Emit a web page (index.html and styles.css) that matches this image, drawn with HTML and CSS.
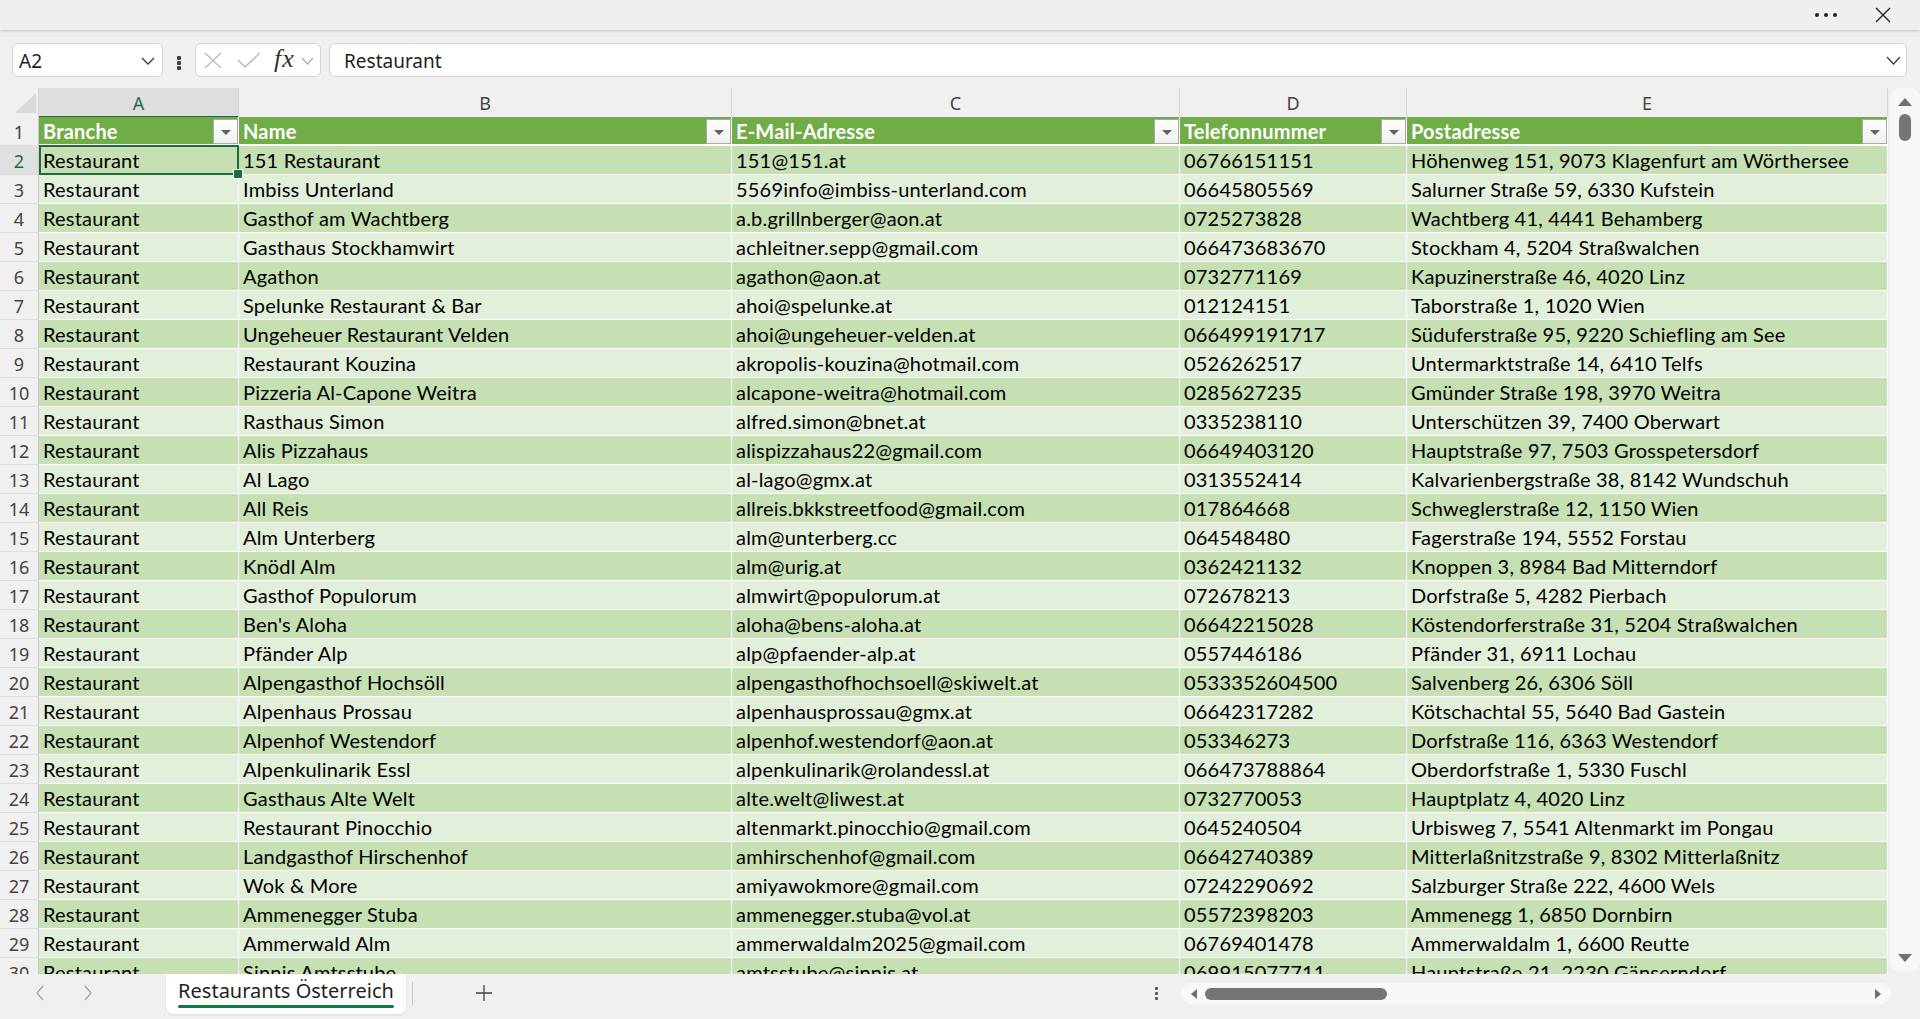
FILE: index.html
```html
<!DOCTYPE html>
<html lang="de">
<head>
<meta charset="utf-8">
<title>Restaurants Österreich</title>
<link rel="stylesheet" href="styles.css">
</head>
<body>
<div class="app">
  <header class="titlebar">
    <span class="more"><i></i><i></i><i></i></span>
    <svg class="close" width="16" height="16" viewBox="0 0 16 16"><path d="M1 1L15 15M15 1L1 15" stroke="#242424" stroke-width="1.4" fill="none"/></svg>
  </header>

  <div class="fbar">
    <div class="namebox">
      <span>A2</span>
      <svg width="14" height="8" viewBox="0 0 14 8"><path d="M1 1L7 7L13 1" stroke="#424242" stroke-width="1.4" fill="none"/></svg>
    </div>
    <div class="vdots"><i></i><i></i><i></i></div>
    <div class="fxgroup">
      <svg class="ic-x" width="18" height="17" viewBox="0 0 18 17"><path d="M1 1L17 16M17 1L1 16" stroke="#b8b8b8" stroke-width="1.3" fill="none"/></svg>
      <svg class="ic-ok" width="24" height="16" viewBox="0 0 24 16"><path d="M1 8L8 15L23 1" stroke="#b8b8b8" stroke-width="1.4" fill="none"/></svg>
      <span class="fx">fx</span>
      <svg class="ic-dd" width="13" height="8" viewBox="0 0 13 8"><path d="M1 1L6.5 7L12 1" stroke="#a8a8a8" stroke-width="1.2" fill="none"/></svg>
    </div>
    <div class="finput">
      <span>Restaurant</span>
      <svg width="15" height="9" viewBox="0 0 15 9"><path d="M1 1L7.5 8L14 1" stroke="#424242" stroke-width="1.4" fill="none"/></svg>
    </div>
  </div>

  <div class="main">
    <div class="sheet">
      <div class="colhdr">
        <div class="corner"><svg width="39" height="28" viewBox="0 0 39 28"><path d="M15 25H36V5Z" fill="#dadada"/></svg></div>
        <div class="ch sel">A</div>
        <div class="ch">B</div>
        <div class="ch">C</div>
        <div class="ch">D</div>
        <div class="ch">E</div>
      </div>

      <div class="row hdr">
        <div class="rh">1</div>
        <div class="c">Branche<span class="flt"></span></div>
        <div class="c">Name<span class="flt"></span></div>
        <div class="c">E-Mail-Adresse<span class="flt"></span></div>
        <div class="c">Telefonnummer<span class="flt"></span></div>
        <div class="c">Postadresse<span class="flt"></span></div>
      </div>

      <div class="row d"><div class="rh sel">2</div><div class="c active">Restaurant</div><div class="c">151 Restaurant</div><div class="c">151@151.at</div><div class="c">06766151151</div><div class="c">Höhenweg 151, 9073 Klagenfurt am Wörthersee</div></div>
      <div class="row l"><div class="rh">3</div><div class="c">Restaurant</div><div class="c">Imbiss Unterland</div><div class="c">5569info@imbiss-unterland.com</div><div class="c">06645805569</div><div class="c">Salurner Straße 59, 6330 Kufstein</div></div>
      <div class="row d"><div class="rh">4</div><div class="c">Restaurant</div><div class="c">Gasthof am Wachtberg</div><div class="c">a.b.grillnberger@aon.at</div><div class="c">0725273828</div><div class="c">Wachtberg 41, 4441 Behamberg</div></div>
      <div class="row l"><div class="rh">5</div><div class="c">Restaurant</div><div class="c">Gasthaus Stockhamwirt</div><div class="c">achleitner.sepp@gmail.com</div><div class="c">066473683670</div><div class="c">Stockham 4, 5204 Straßwalchen</div></div>
      <div class="row d"><div class="rh">6</div><div class="c">Restaurant</div><div class="c">Agathon</div><div class="c">agathon@aon.at</div><div class="c">0732771169</div><div class="c">Kapuzinerstraße 46, 4020 Linz</div></div>
      <div class="row l"><div class="rh">7</div><div class="c">Restaurant</div><div class="c">Spelunke Restaurant &amp; Bar</div><div class="c">ahoi@spelunke.at</div><div class="c">012124151</div><div class="c">Taborstraße 1, 1020 Wien</div></div>
      <div class="row d"><div class="rh">8</div><div class="c">Restaurant</div><div class="c">Ungeheuer Restaurant Velden</div><div class="c">ahoi@ungeheuer-velden.at</div><div class="c">066499191717</div><div class="c">Süduferstraße 95, 9220 Schiefling am See</div></div>
      <div class="row l"><div class="rh">9</div><div class="c">Restaurant</div><div class="c">Restaurant Kouzina</div><div class="c">akropolis-kouzina@hotmail.com</div><div class="c">0526262517</div><div class="c">Untermarktstraße 14, 6410 Telfs</div></div>
      <div class="row d"><div class="rh">10</div><div class="c">Restaurant</div><div class="c">Pizzeria Al-Capone Weitra</div><div class="c">alcapone-weitra@hotmail.com</div><div class="c">0285627235</div><div class="c">Gmünder Straße 198, 3970 Weitra</div></div>
      <div class="row l"><div class="rh">11</div><div class="c">Restaurant</div><div class="c">Rasthaus Simon</div><div class="c">alfred.simon@bnet.at</div><div class="c">0335238110</div><div class="c">Unterschützen 39, 7400 Oberwart</div></div>
      <div class="row d"><div class="rh">12</div><div class="c">Restaurant</div><div class="c">Alis Pizzahaus</div><div class="c">alispizzahaus22@gmail.com</div><div class="c">06649403120</div><div class="c">Hauptstraße 97, 7503 Grosspetersdorf</div></div>
      <div class="row l"><div class="rh">13</div><div class="c">Restaurant</div><div class="c">Al Lago</div><div class="c">al-lago@gmx.at</div><div class="c">0313552414</div><div class="c">Kalvarienbergstraße 38, 8142 Wundschuh</div></div>
      <div class="row d"><div class="rh">14</div><div class="c">Restaurant</div><div class="c">All Reis</div><div class="c">allreis.bkkstreetfood@gmail.com</div><div class="c">017864668</div><div class="c">Schweglerstraße 12, 1150 Wien</div></div>
      <div class="row l"><div class="rh">15</div><div class="c">Restaurant</div><div class="c">Alm Unterberg</div><div class="c">alm@unterberg.cc</div><div class="c">064548480</div><div class="c">Fagerstraße 194, 5552 Forstau</div></div>
      <div class="row d"><div class="rh">16</div><div class="c">Restaurant</div><div class="c">Knödl Alm</div><div class="c">alm@urig.at</div><div class="c">0362421132</div><div class="c">Knoppen 3, 8984 Bad Mitterndorf</div></div>
      <div class="row l"><div class="rh">17</div><div class="c">Restaurant</div><div class="c">Gasthof Populorum</div><div class="c">almwirt@populorum.at</div><div class="c">072678213</div><div class="c">Dorfstraße 5, 4282 Pierbach</div></div>
      <div class="row d"><div class="rh">18</div><div class="c">Restaurant</div><div class="c">Ben's Aloha</div><div class="c">aloha@bens-aloha.at</div><div class="c">06642215028</div><div class="c">Köstendorferstraße 31, 5204 Straßwalchen</div></div>
      <div class="row l"><div class="rh">19</div><div class="c">Restaurant</div><div class="c">Pfänder Alp</div><div class="c">alp@pfaender-alp.at</div><div class="c">0557446186</div><div class="c">Pfänder 31, 6911 Lochau</div></div>
      <div class="row d"><div class="rh">20</div><div class="c">Restaurant</div><div class="c">Alpengasthof Hochsöll</div><div class="c">alpengasthofhochsoell@skiwelt.at</div><div class="c">0533352604500</div><div class="c">Salvenberg 26, 6306 Söll</div></div>
      <div class="row l"><div class="rh">21</div><div class="c">Restaurant</div><div class="c">Alpenhaus Prossau</div><div class="c">alpenhausprossau@gmx.at</div><div class="c">06642317282</div><div class="c">Kötschachtal 55, 5640 Bad Gastein</div></div>
      <div class="row d"><div class="rh">22</div><div class="c">Restaurant</div><div class="c">Alpenhof Westendorf</div><div class="c">alpenhof.westendorf@aon.at</div><div class="c">053346273</div><div class="c">Dorfstraße 116, 6363 Westendorf</div></div>
      <div class="row l"><div class="rh">23</div><div class="c">Restaurant</div><div class="c">Alpenkulinarik Essl</div><div class="c">alpenkulinarik@rolandessl.at</div><div class="c">066473788864</div><div class="c">Oberdorfstraße 1, 5330 Fuschl</div></div>
      <div class="row d"><div class="rh">24</div><div class="c">Restaurant</div><div class="c">Gasthaus Alte Welt</div><div class="c">alte.welt@liwest.at</div><div class="c">0732770053</div><div class="c">Hauptplatz 4, 4020 Linz</div></div>
      <div class="row l"><div class="rh">25</div><div class="c">Restaurant</div><div class="c">Restaurant Pinocchio</div><div class="c">altenmarkt.pinocchio@gmail.com</div><div class="c">0645240504</div><div class="c">Urbisweg 7, 5541 Altenmarkt im Pongau</div></div>
      <div class="row d"><div class="rh">26</div><div class="c">Restaurant</div><div class="c">Landgasthof Hirschenhof</div><div class="c">amhirschenhof@gmail.com</div><div class="c">06642740389</div><div class="c">Mitterlaßnitzstraße 9, 8302 Mitterlaßnitz</div></div>
      <div class="row l"><div class="rh">27</div><div class="c">Restaurant</div><div class="c">Wok &amp; More</div><div class="c">amiyawokmore@gmail.com</div><div class="c">07242290692</div><div class="c">Salzburger Straße 222, 4600 Wels</div></div>
      <div class="row d"><div class="rh">28</div><div class="c">Restaurant</div><div class="c">Ammenegger Stuba</div><div class="c">ammenegger.stuba@vol.at</div><div class="c">05572398203</div><div class="c">Ammenegg 1, 6850 Dornbirn</div></div>
      <div class="row l"><div class="rh">29</div><div class="c">Restaurant</div><div class="c">Ammerwald Alm</div><div class="c">ammerwaldalm2025@gmail.com</div><div class="c">06769401478</div><div class="c">Ammerwaldalm 1, 6600 Reutte</div></div>
      <div class="row d"><div class="rh">30</div><div class="c">Restaurant</div><div class="c">Sinnis Amtsstube</div><div class="c">amtsstube@sinnis.at</div><div class="c">069915077711</div><div class="c">Hauptstraße 21, 2230 Gänserndorf</div></div>
    </div>

    <div class="vscroll">
      <span class="tri up"></span>
      <span class="vthumb"></span>
      <span class="grow"></span>
      <span class="tri down"></span>
    </div>
  </div>

  <footer class="bottombar">
    <div class="nav">
      <svg width="10" height="16" viewBox="0 0 10 16"><path d="M8 1L2 8L8 15" stroke="#a3a3a3" stroke-width="1.3" fill="none"/></svg>
      <svg width="10" height="16" viewBox="0 0 10 16"><path d="M2 1L8 8L2 15" stroke="#a3a3a3" stroke-width="1.3" fill="none"/></svg>
    </div>
    <div class="tab">
      <span class="tabname">Restaurants Österreich</span>
      <span class="tabline"></span>
    </div>
    <span class="tabsep"></span>
    <div class="plus"><svg width="18" height="18" viewBox="0 0 18 18"><path d="M9 1V17M1 9H17" stroke="#424242" stroke-width="1.3" fill="none"/></svg></div>
    <span class="grow"></span>
    <div class="vdots small"><i></i><i></i><i></i></div>
    <div class="hscroll">
      <span class="tri left"></span>
      <span class="hthumb"></span>
      <span class="grow"></span>
      <span class="tri right"></span>
    </div>
  </footer>
</div>
</body>
</html>
```

FILE: styles.css
```css
* { box-sizing: border-box; margin: 0; padding: 0; }
html, body { width: 1920px; height: 1019px; overflow: hidden; }
body { background: #f0f0f0; font-family: "Noto Sans", "Open Sans", sans-serif; color: #242424; }

.app { display: flex; flex-direction: column; height: 1019px; }

/* title bar */
.titlebar {
  height: 30px; flex: none;
  display: flex; align-items: center; justify-content: flex-end;
  gap: 38px; padding-right: 29px;
  background: #efefef;
  box-shadow: 0 1px 3px rgba(0, 0, 0, 0.2);
  position: relative; z-index: 2;
}
.more { display: flex; gap: 5px; }
.more i { display: block; width: 4px; height: 4px; border-radius: 50%; background: #242424; }
.close { display: block; }

/* formula bar */
.fbar { height: 58px; flex: none; display: flex; align-items: flex-start; padding: 13px 13px 0 12px; }
.namebox {
  width: 151px; height: 34px; background: #fff;
  border: 1px solid #d4d4d4; border-radius: 6px;
  display: flex; align-items: center; justify-content: space-between;
  padding: 2px 7px 0 6px; font-size: 19px; color: #1f1f1f;
}
.namebox svg { margin-top: -1px; }
.vdots { width: 32px; height: 34px; display: flex; flex-direction: column; align-items: center; justify-content: center; gap: 1.5px; padding-top: 6px; }
.vdots i { display: block; width: 4px; height: 3.5px; background: #424242; border-radius: 1px; }
.fxgroup {
  width: 126px; height: 34px; background: #fff;
  border: 1px solid #d4d4d4; border-radius: 6px;
  display: flex; align-items: center; padding-left: 8px;
}
.ic-x { margin-top: 1px; }
.ic-ok { margin-left: 15px; }
.fx { margin-left: 13px; font-family: "Liberation Serif", "DejaVu Serif", serif; font-style: italic; font-size: 26px; color: #333; line-height: 1; margin-top: -3px; letter-spacing: 1px; }
.ic-dd { margin-left: 6px; margin-top: 2px; }
.finput {
  flex: 1; margin-left: 8px; height: 34px; background: #fff;
  border: 1px solid #d4d4d4; border-radius: 6px;
  display: flex; align-items: center; justify-content: space-between;
  padding: 2px 5px 0 14px; font-size: 19px; color: #1f1f1f;
}
.finput svg { margin-top: -2px; }

/* main grid */
.main { height: 886px; flex: none; display: flex; }
.sheet { width: 1888px; height: 886px; overflow: hidden; font-family: "Lato", "Liberation Sans", sans-serif; font-size: 20px; letter-spacing: 0.2px; color: #000; }

.colhdr, .row {
  display: grid;
  grid-template-columns: 39px 200px 493px 448px 227px 481px;
}
.colhdr { height: 29px; }
.corner { border-bottom: 1px solid #c4c4c4; border-right: 1px solid #d4d4d4; }
.corner svg { display: block; }
.ch {
  font-family: "Noto Sans", sans-serif; font-size: 18px; color: #444; letter-spacing: 0;
  text-align: center; line-height: 26px; padding-top: 2px;
  border-right: 1px solid #d6d6d6; border-bottom: 1px solid #c4c4c4;
}
.ch.sel { background: #dedede; color: #1c6e41; border-bottom: 2px solid #1c6e41; }

.row { height: 29px; }
.rh {
  font-family: "Noto Sans", sans-serif; font-size: 18px; color: #444; letter-spacing: 0;
  text-align: center; line-height: 26px; padding-top: 2px;
  background: #f0f0f0;
  border-right: 1px solid #c8c8c8; border-bottom: 1px solid #e0e0e0;
}
.rh.sel { background: #e0e0e0; color: #1c6e41; }
.c {
  position: relative;
  padding: 0 3px 0 4px;
  white-space: nowrap; overflow: hidden;
  line-height: 28px;
  border-right: 1px solid #fff; border-bottom: 1px solid #fff;
}
.row.d .c { background: #c6e0b4; }
.row.l .c { background: #e2efda; }

.row.hdr { height: 29px; }
.row.hdr .c {
  background: #70ad47; color: #fff; font-weight: 700;
  line-height: 26px; padding-top: 1px; border-bottom: 2px solid #fff;
}
.flt {
  position: absolute; right: 0; bottom: 0;
  width: 25px; height: 25px;
  background: linear-gradient(#ffffff, #efefef);
  border: 1px solid #a9a9a9;
}
.flt::after {
  content: ""; position: absolute; left: 7px; top: 10px;
  border-left: 5px solid transparent; border-right: 5px solid transparent;
  border-top: 5px solid #616161;
}

.c.active { overflow: visible; }
.c.active::before {
  content: ""; position: absolute; left: 0; top: -1px; right: -1px; bottom: -1px;
  border: 2px solid #1c6e41; pointer-events: none;
}
.c.active::after {
  content: ""; position: absolute; right: -5px; bottom: -5px;
  width: 8px; height: 8px; background: #1c6e41; border: 1px solid #fff; z-index: 1;
}

/* vertical scrollbar */
.vscroll {
  width: 30px; margin-left: 2px; height: 884px;
  background: #f7f7f7; border-radius: 10px;
  display: flex; flex-direction: column; align-items: center;
  padding: 10px 0 10px;
}
.grow { flex: 1; }
.tri { display: block; width: 0; height: 0; }
.tri.up { border-left: 7px solid transparent; border-right: 7px solid transparent; border-bottom: 8px solid #707070; }
.tri.down { border-left: 7px solid transparent; border-right: 7px solid transparent; border-top: 8px solid #707070; }
.vthumb { display: block; width: 12px; height: 27px; margin-top: 8px; border-radius: 6px; background: #757575; }

/* bottom bar */
.bottombar { height: 45px; flex: none; display: flex; align-items: flex-start; }
.nav { width: 166px; display: flex; padding-left: 35px; gap: 38px; padding-top: 11px; }
.nav svg { display: block; }
.tab {
  width: 240px; height: 40px; background: #fff;
  border-radius: 0 0 7px 7px;
  box-shadow: 0 1px 2px rgba(0, 0, 0, 0.1);
  display: flex; flex-direction: column; align-items: center;
  padding-top: 4px;
}
.tabname { font-size: 20px; line-height: 25px; color: #1f1f1f; }
.tabline { display: block; width: 216px; height: 3px; margin-top: 2px; background: #107c41; border-radius: 2px; }
.tabsep { display: block; width: 1px; height: 24px; margin: 8px 0 0 6px; background: #c9c9c9; }
.plus { width: 32px; margin-left: 55px; display: flex; justify-content: center; padding-top: 10px; }
.plus svg { display: block; }
.vdots.small { width: 20px; height: 45px; justify-content: flex-start; padding-top: 13px; gap: 2px; }
.vdots.small i { width: 3px; height: 3px; background: #555; }
.hscroll {
  width: 710px; margin-left: 15px; margin-right: 29px; margin-top: 9px;
  height: 21px; background: #f8f8f8; border-radius: 10px;
  display: flex; align-items: center; padding: 0 10px 0 10px;
}
.tri.left { border-top: 5px solid transparent; border-bottom: 5px solid transparent; border-right: 6px solid #707070; }
.tri.right { border-top: 5px solid transparent; border-bottom: 5px solid transparent; border-left: 6px solid #707070; }
.hthumb { display: block; width: 182px; height: 12px; margin-left: 8px; border-radius: 6px; background: #757575; }
```
